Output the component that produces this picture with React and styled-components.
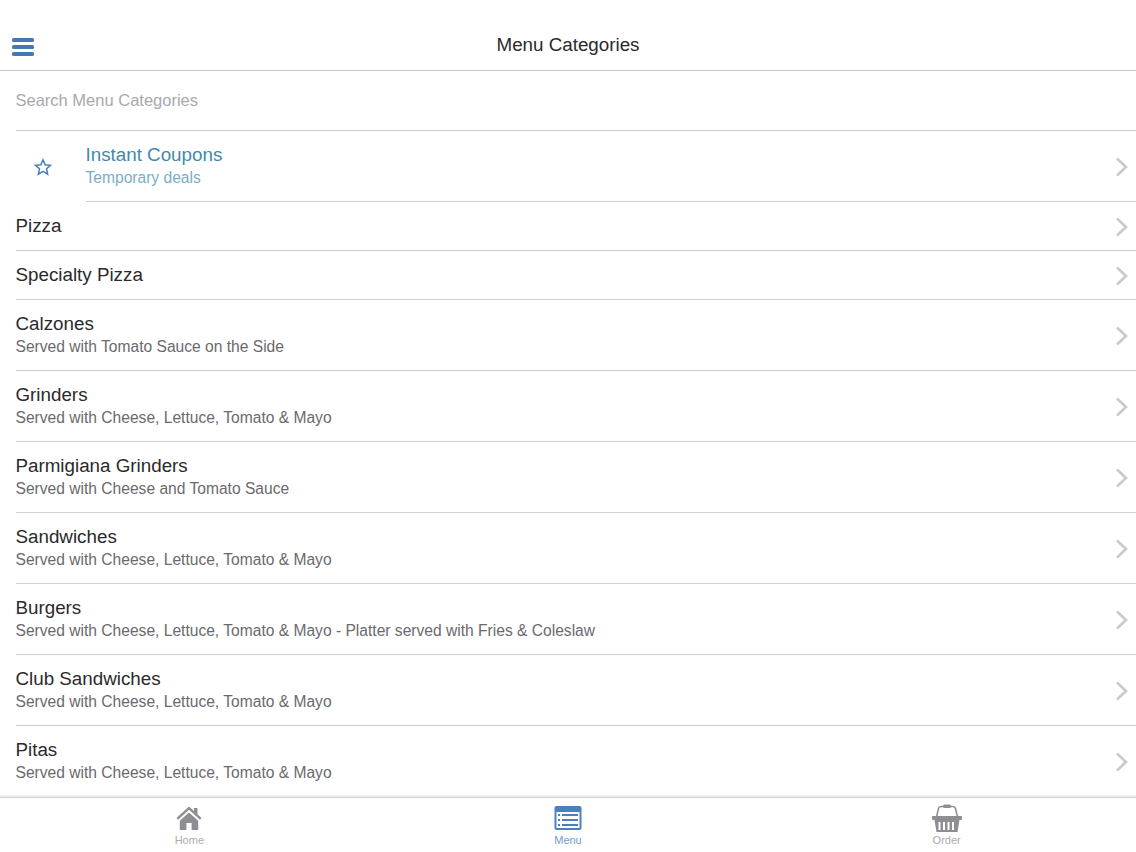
import React from 'react';
import styled, { createGlobalStyle } from 'styled-components';

const GlobalStyle = createGlobalStyle`
  html, body {
    margin: 0;
    padding: 0;
    background: #fff;
    font-family: "Liberation Sans", Arial, sans-serif;
  }
  * {
    box-sizing: border-box;
  }
`;

const Page = styled.div`
  width: 1136px;
  height: 852px;
  display: flex;
  flex-direction: column;
  overflow: hidden;
  background: #fff;
`;

const Header = styled.header`
  height: 71px;
  flex-shrink: 0;
  display: flex;
  align-items: center;
  justify-content: center;
  position: relative;
  padding-top: 20px;
  border-bottom: 1px solid #c4c4c6;
`;

const Title = styled.h1`
  margin: 0;
  font-size: 18.8px;
  font-weight: 400;
  color: #2a2a2c;
`;

const MenuButton = styled.div`
  position: absolute;
  left: 12px;
  top: 38px;
  width: 22px;
  height: 18px;
  display: flex;
  flex-direction: column;
  justify-content: space-between;

  span {
    height: 4px;
    border-radius: 1.5px;
    background: #4577b0;
  }
`;

const Content = styled.main`
  flex: 1;
  min-height: 0;
`;

const Search = styled.div`
  height: 60px;
  margin-left: 15.5px;
  display: flex;
  align-items: center;
  border-bottom: 1px solid #cfcfd1;
  font-size: 16.5px;
  color: #a8a8ad;
`;

const Row = styled.div`
  height: ${(props) => props.height}px;
  display: flex;
  align-items: stretch;
`;

const IconCell = styled.div`
  width: 85.5px;
  flex-shrink: 0;
  display: flex;
  align-items: center;
  justify-content: center;
  color: #4a7dbd;
`;

const RowBody = styled.div`
  flex: 1;
  min-width: 0;
  margin-left: ${(props) => (props.$inset ? 0 : 15.5)}px;
  padding-right: 8px;
  display: flex;
  align-items: center;
  border-bottom: 1px solid #cfcfd1;
`;

const RowText = styled.div`
  flex: 1;
  min-width: 0;
`;

const RowTitle = styled.div`
  font-size: 18.8px;
  line-height: 22px;
  color: ${(props) => (props.$accent ? '#4289ac' : '#2a2a2c')};
`;

const RowSub = styled.div`
  font-size: 15.6px;
  line-height: 21px;
  margin-top: 1px;
  color: ${(props) => (props.$accent ? '#78aec8' : '#6a6a6e')};
`;

const Chevron = styled.svg`
  width: 13px;
  height: 20px;
  flex-shrink: 0;
  margin-top: 2px;
  fill: none;
  stroke: #c9c9ce;
  stroke-width: 2.6;
`;

const TabBar = styled.nav`
  height: 55px;
  flex-shrink: 0;
  display: grid;
  grid-template-columns: repeat(3, 1fr);
  border-top: 1px solid #d4d4d6;
  box-shadow: 0 -2px 0 #eeeeef;
  background: #fff;
`;

const Tab = styled.div`
  display: flex;
  flex-direction: column;
  align-items: center;
  padding-top: 6px;
  color: ${(props) => (props.$active ? '#4a80c2' : '#8e8e92')};
`;

const TabIcon = styled.svg`
  width: 32px;
  height: 30px;
  display: block;
`;

const TabLabel = styled.span`
  font-size: 11px;
  line-height: 12px;
  color: ${(props) => (props.$active ? '#6f9bd0' : '#ababaf')};
`;

const categories = [
  { title: 'Pizza' },
  { title: 'Specialty Pizza' },
  { title: 'Calzones', sub: 'Served with Tomato Sauce on the Side' },
  { title: 'Grinders', sub: 'Served with Cheese, Lettuce, Tomato & Mayo' },
  { title: 'Parmigiana Grinders', sub: 'Served with Cheese and Tomato Sauce' },
  { title: 'Sandwiches', sub: 'Served with Cheese, Lettuce, Tomato & Mayo' },
  { title: 'Burgers', sub: 'Served with Cheese, Lettuce, Tomato & Mayo - Platter served with Fries & Coleslaw' },
  { title: 'Club Sandwiches', sub: 'Served with Cheese, Lettuce, Tomato & Mayo' },
  { title: 'Pitas', sub: 'Served with Cheese, Lettuce, Tomato & Mayo' },
];

const RowArrow = () => (
  <Chevron viewBox="0 0 13 20">
    <path d="M2 1.5 L11 10 L2 18.5" />
  </Chevron>
);

const StarIcon = () => (
  <svg width="18" height="18" viewBox="0 0 24 24" fill="none" stroke="currentColor" strokeWidth="2" strokeLinejoin="miter">
    <path d="M12 2.5 L14.9 9 L22 9.7 L16.7 14.4 L18.2 21.5 L12 17.8 L5.8 21.5 L7.3 14.4 L2 9.7 L9.1 9 Z" />
  </svg>
);

const HomeIcon = () => (
  <TabIcon viewBox="0 0 32 30" fill="currentColor">
    <path d="M16 2.5 L3.5 14 L5 15.8 L16 5.8 L27 15.8 L28.5 14 L24.5 10.3 L24.5 4 L21 4 L21 7 Z" />
    <path d="M16 8.5 L6.8 16.8 L6.8 26 L13.4 26 L13.4 19 L18.6 19 L18.6 26 L25.2 26 L25.2 16.8 Z" />
  </TabIcon>
);

const MenuIcon = () => (
  <TabIcon viewBox="0 0 32 30">
    <rect x="2.5" y="2" width="27" height="24" rx="2" fill="currentColor" />
    <rect x="4.5" y="8" width="23" height="16" fill="#fff" />
    <g fill="currentColor">
      <rect x="6" y="10" width="2" height="2" />
      <rect x="6" y="15" width="2" height="2" />
      <rect x="6" y="20" width="2" height="2" />
      <rect x="10" y="10" width="16" height="2" />
      <rect x="10" y="15" width="16" height="2" />
      <rect x="10" y="20" width="16" height="2" />
    </g>
  </TabIcon>
);

const BasketIcon = () => (
  <TabIcon viewBox="0 0 32 30">
    <path d="M5.5 13 L7.5 4.5 Q8 2.5 10.5 2.5 L21.5 2.5 Q24 2.5 24.5 4.5 L26.5 13" fill="none" stroke="currentColor" strokeWidth="1.5" />
    <rect x="12" y="0.5" width="8" height="3.5" rx="1.5" fill="currentColor" />
    <rect x="1" y="12" width="30" height="4" rx="1" fill="currentColor" />
    <path d="M3.5 16 L28.5 16 L26.5 28 L5.5 28 Z" fill="currentColor" />
    <g fill="#fff">
      <rect x="7.5" y="18" width="2" height="8" />
      <rect x="12" y="18" width="2" height="8" />
      <rect x="16.5" y="18" width="2" height="8" />
      <rect x="21" y="18" width="2" height="8" />
    </g>
  </TabIcon>
);

export default function App() {
  return (
    <Page>
      <GlobalStyle />
      <Header>
        <MenuButton>
          <span />
          <span />
          <span />
        </MenuButton>
        <Title>Menu Categories</Title>
      </Header>
      <Content>
        <Search>Search Menu Categories</Search>
        <Row height={71}>
          <IconCell>
            <StarIcon />
          </IconCell>
          <RowBody $inset>
            <RowText>
              <RowTitle $accent>Instant Coupons</RowTitle>
              <RowSub $accent>Temporary deals</RowSub>
            </RowText>
            <RowArrow />
          </RowBody>
        </Row>
        {categories.map((item) => (
          <Row key={item.title} height={item.sub ? 71 : 49}>
            <RowBody>
              <RowText>
                <RowTitle>{item.title}</RowTitle>
                {item.sub && <RowSub>{item.sub}</RowSub>}
              </RowText>
              <RowArrow />
            </RowBody>
          </Row>
        ))}
      </Content>
      <TabBar>
        <Tab>
          <HomeIcon />
          <TabLabel>Home</TabLabel>
        </Tab>
        <Tab $active>
          <MenuIcon />
          <TabLabel $active>Menu</TabLabel>
        </Tab>
        <Tab>
          <BasketIcon />
          <TabLabel>Order</TabLabel>
        </Tab>
      </TabBar>
    </Page>
  );
}
